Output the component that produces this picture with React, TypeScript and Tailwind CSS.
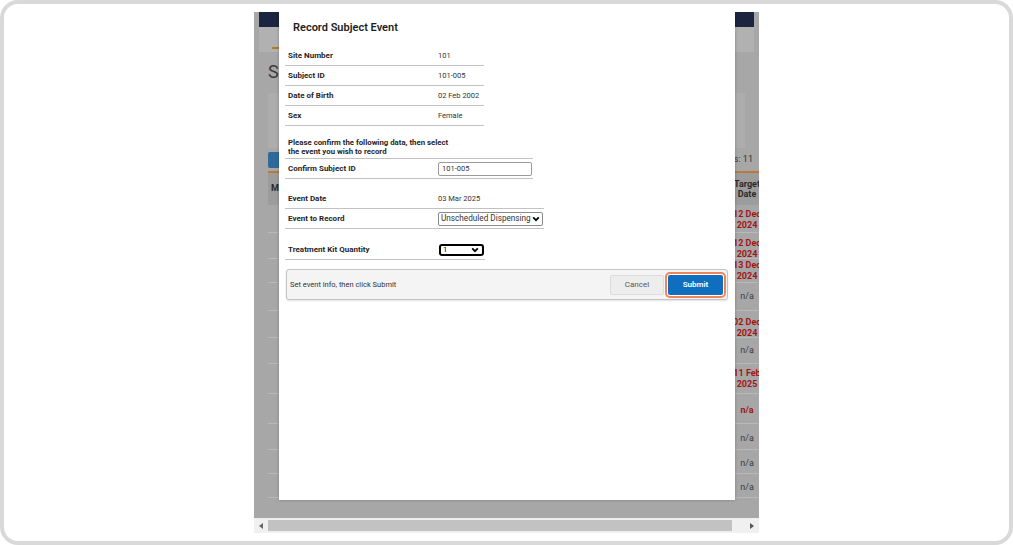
import React from "react";

const Chevron = ({ className }: { className?: string }) => (
  <svg viewBox="0 0 10 7" className={className}>
    <path d="M1.5 1.5 L5 5 L8.5 1.5" fill="none" stroke="currentColor" strokeWidth="2.2" />
  </svg>
);

interface RowProps {
  label: string;
  children?: React.ReactNode;
  className: string;
}

const InfoRow = ({ label, children, className }: RowProps) => (
  <div className={`flex h-[20px] items-center border-b border-[#c2c2c2] ${className}`}>
    <div className="w-[153px] shrink-0 pl-[3px] text-[8px] font-bold text-[#1f1f1f]">{label}</div>
    <div className="flex items-center text-[7.5px] text-[#333]">{children}</div>
  </div>
);

// target date column of the table behind the dialog
const dates = [
  { h: "h-[28px]", pt: "pt-[2px]", a: "12 Dec", b: "2024", red: true },
  { h: "h-[26px]", pt: "pt-[6px]", a: "12 Dec", b: "2024", red: true },
  { h: "h-[24px]", pt: "pt-[0px]", a: "13 Dec", b: "2024", red: true },
  { h: "h-[28px]", pt: "pt-[0px]", a: "n/a" },
  { h: "h-[27px]", pt: "pt-[7px]", a: "02 Dec", b: "2024", red: true },
  { h: "h-[26px]", pt: "pt-[0px]", a: "n/a" },
  { h: "h-[30px]", pt: "pt-[0px]", a: "11 Feb", b: "2025", red: true },
  { h: "h-[30px]", pt: "pt-[4px]", a: "n/a", red: true },
  { h: "h-[26px]", pt: "pt-[4px]", a: "n/a" },
  { h: "h-[24px]", pt: "pt-[4px]", a: "n/a" },
  { h: "h-[24px]", pt: "pt-[4px]", a: "n/a" },
];

const Background = () => (
  <div className="flex h-[506px] flex-col bg-[#a7a7a7]">
    <div className="mx-[5px] h-[15px] shrink-0 bg-[#1b2540]" />
    <div className="mx-[5px] flex h-[25px] shrink-0 items-end bg-[#b1b1b1] pl-[13px]">
      <div className="mb-[3px] h-[2px] w-[9px] bg-[#b8782f]" />
    </div>
    <div className="h-[41px] shrink-0 pl-[14px] pt-[11px] text-[18px] leading-[18px] text-[#3a3a3a]">S</div>
    <div className="ml-[14px] mr-[14px] h-[55px] shrink-0 bg-[#adadad]" />
    <div className="mt-[4px] flex h-[16px] shrink-0 items-center justify-between pl-[14px] pr-[6px]">
      <div className="h-[16px] w-[16px] rounded-[2px] bg-[#2d6a9a]" />
      <span className="text-[9px] text-[#333]">Rows: 11</span>
    </div>
    <div className="ml-[14px] mt-[3px] h-[2px] shrink-0 bg-[#b67a3e]" />
    <div className="ml-[14px] -mr-[8px] flex h-[32px] shrink-0 items-center justify-between bg-[#9c9c9c]">
      <span className="pl-[3px] text-[9px] font-bold text-[#2a2a2a]">M</span>
      <div className="w-[40px] text-center text-[9px] font-bold leading-[10px] text-[#2a2a2a]">
        Target
        <br />
        Date
      </div>
    </div>
    {dates.map((d, i) => (
      <div
        key={i}
        className={`ml-[14px] -mr-[8px] flex shrink-0 items-center justify-end border-b border-[#b9b9b9] ${d.h} ${d.pt}`}
      >
        <div
          className={`w-[40px] text-center text-[9px] leading-[11px] ${
            d.red ? "font-bold text-[#a31515]" : "text-[#3c3c3c]"
          }`}
        >
          {d.a}
          {d.b && <br />}
          {d.b}
        </div>
      </div>
    ))}
  </div>
);

const Scrollbar = () => (
  <div className="flex h-[15px] items-center bg-[#f0f0f0]">
    <div className="flex w-[14px] justify-center">
      <div className="h-0 w-0 border-y-[3px] border-r-[4px] border-y-transparent border-r-[#666]" />
    </div>
    <div className="h-[11px] w-[464px] bg-[#c2c2c2]" />
    <div className="flex flex-1 justify-end pr-[5px]">
      <div className="h-0 w-0 border-y-[3px] border-l-[4px] border-y-transparent border-l-[#555]" />
    </div>
  </div>
);

const Modal = () => (
  <div className="absolute left-[25px] top-0 flex h-[488px] w-[456px] flex-col bg-white px-[6px] pt-[9px] shadow-[0_0_3px_rgba(0,0,0,0.25)]">
    <h2 className="ml-[8px] h-[14px] text-[11px] font-semibold leading-[14px] text-[#1e1e1e]">Record Subject Event</h2>

    <div className="mt-[11px] flex flex-col">
      <InfoRow label="Site Number" className="w-[199px]">101</InfoRow>
      <InfoRow label="Subject ID" className="w-[199px]">101-005</InfoRow>
      <InfoRow label="Date of Birth" className="w-[199px]">02 Feb 2002</InfoRow>
      <InfoRow label="Sex" className="w-[199px]">Female</InfoRow>
    </div>

    <div className="mt-[12px] w-[248px] border-b border-[#c2c2c2] pb-[2px] pl-[3px] text-[7.8px] font-bold leading-[9px] text-[#1f1f1f]">
      Please confirm the following data, then select
      <br />
      the event you wish to record
    </div>
    <InfoRow label="Confirm Subject ID" className="w-[248px]">
      <div className="flex h-[14px] w-[94px] items-center rounded-[2px] border border-[#9a9a9a] pl-[3px]">101-005</div>
    </InfoRow>

    <div className="mt-[10px] flex flex-col">
      <InfoRow label="Event Date" className="w-[259px]">03 Mar 2025</InfoRow>
      <InfoRow label="Event to Record" className="w-[259px]">
        <div className="flex h-[14px] w-[105px] items-center justify-between rounded-[2px] border border-[#8a8a8a] pl-[2px] pr-[2px] text-[8.2px]">
          <span>Unscheduled Dispensing</span>
          <Chevron className="h-[6px] w-[8px] text-black" />
        </div>
      </InfoRow>
    </div>

    <div className="mt-[11px]">
      <InfoRow label="Treatment Kit Quantity" className="w-[200px]">
        <div className="ml-[1px] flex h-[12px] w-[45px] items-center justify-between rounded-[3px] border-2 border-black pl-[2px] pr-[3px] text-black">
          <span>1</span>
          <Chevron className="h-[6px] w-[8px]" />
        </div>
      </InfoRow>
    </div>

    <div className="ml-[1px] mt-[9px] flex h-[31px] w-[442px] items-center justify-between rounded-[3px] border border-[#c4c4c4] bg-[#f4f4f4] pl-[3px] pr-[4px] shadow-[0_1px_2px_rgba(0,0,0,0.12)]">
      <span className="text-[7.5px] text-[#333]">Set event info, then click Submit</span>
      <div className="flex items-center gap-[4px]">
        <button className="h-[20px] w-[54px] rounded-[2px] border border-[#dcdcdc] bg-[#ededed] text-[8px] text-[#555]">
          Cancel
        </button>
        <button className="h-[20px] w-[55px] rounded-[2px] bg-[#0f6fbe] text-[8px] font-semibold text-white ring-2 ring-[#f0845a] ring-offset-1">
          Submit
        </button>
      </div>
    </div>
  </div>
);

export default function App() {
  return (
    <div className="h-[545px] w-[1013px] overflow-hidden rounded-[18px] border-4 border-[#d9d9d9] bg-white font-['Roboto',sans-serif]">
      <div className="relative ml-[250px] mt-[8px] flex h-[521px] w-[505px] flex-col overflow-hidden">
        <Background />
        <Scrollbar />
        <Modal />
      </div>
    </div>
  );
}
